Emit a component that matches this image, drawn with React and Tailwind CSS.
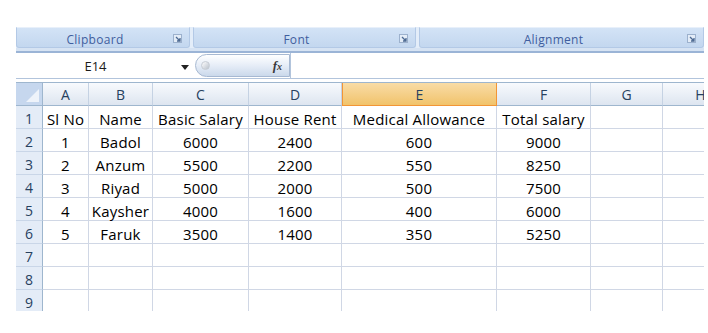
import React from "react";

const cols = [
  { key: "A", w: "w-[46px]" },
  { key: "B", w: "w-[64px]" },
  { key: "C", w: "w-[96px]" },
  { key: "D", w: "w-[93px]" },
  { key: "E", w: "w-[155px]" },
  { key: "F", w: "w-[94px]" },
  { key: "G", w: "w-[72px]" },
  { key: "H", w: "w-[76px]" },
];

const rows = [
  ["Sl No", "Name", "Basic Salary", "House Rent", "Medical Allowance", "Total salary"],
  ["1", "Badol", "6000", "2400", "600", "9000"],
  ["2", "Anzum", "5500", "2200", "550", "8250"],
  ["3", "Riyad", "5000", "2000", "500", "7500"],
  ["4", "Kaysher", "4000", "1600", "400", "6000"],
  ["5", "Faruk", "3500", "1400", "350", "5250"],
  [],
  [],
  [],
];

function Launcher() {
  return (
    <svg width="9" height="9" viewBox="0 0 9 9" className="shrink-0 mt-[2px]">
      <rect x="0.5" y="0.5" width="8" height="8" fill="#e3ecf7" stroke="#9cb1cd" />
      <path d="M3 3 L7 7 M7 4 V7 H4" stroke="#4d6a93" strokeWidth="1.3" fill="none" />
    </svg>
  );
}

function Group({ label, w }) {
  return (
    <div
      className={`${w} shrink-0 h-[21px] flex items-center justify-between pr-[7px] rounded-b-[3px] border border-t-[#e8f0fa] border-[#b3c9e6] bg-gradient-to-b from-[#d3e3f6] to-[#c3d7ef]`}
    >
      <span className="flex-1 text-center pt-[4px] text-[12px] tracking-[0.3px] text-[#3f5e9e]">{label}</span>
      <Launcher />
    </div>
  );
}

export default function App() {
  return (
    <div className="w-[708px] h-[333px] bg-white overflow-hidden font-['Open_Sans',sans-serif]">
      <div className="ml-4 pt-[27px] w-[688px] overflow-hidden">
        {/* ribbon group labels */}
        <div className="flex gap-[3px] bg-[#e3edf9]">
          <Group label="Clipboard" w="w-[174px]" />
          <Group label="Font" w="w-[223px]" />
          <Group label="Alignment" w="w-[285px]" />
        </div>
        <div className="h-[5px] bg-[#d6e3f3] border-b-2 border-[#9bb4d6]" />

        {/* formula bar */}
        <div className="flex h-[26px] items-center bg-white border-b border-[#b2c4dc]">
          <div className="w-[159px] shrink-0 text-center pt-[3px] text-[13px] text-[#1b1b1b]">E14</div>
          <div className="w-[20px] shrink-0 flex justify-center pt-[3px]">
            <svg width="8" height="5" viewBox="0 0 8 5">
              <path d="M0 0 H8 L4 5 Z" fill="#222" />
            </svg>
          </div>
          <div className="w-[95px] shrink-0 h-[23px] rounded-l-full border border-[#a7b9d2] bg-gradient-to-b from-[#ffffff] via-[#e6edf7] to-[#cbd9eb] flex items-center justify-between pl-[5px] pr-[7px]">
            <span className="w-[9px] h-[9px] rounded-full bg-gradient-to-br from-[#ffffff] to-[#b9c1cb] border border-[#c6ccd4]" />
            <span className="font-['Liberation_Serif',serif] italic font-bold text-[13px] text-[#3a3a3a]">
              f<span className="text-[10px]">x</span>
            </span>
          </div>
          <div className="flex-1 h-full border-l border-[#b2c4dc]" />
        </div>
        <div className="h-[3px]" />

        {/* grid */}
        <div className="h-[229px] overflow-hidden border-t border-[#9eb6ce]">
          <div className="flex h-[23px]">
            <div className="w-[27px] shrink-0 h-full bg-[#c6d7ee] border-r border-b border-[#9eb6ce] flex items-end justify-end p-[3px]">
              <svg width="13" height="13" viewBox="0 0 13 13">
                <path d="M13 0 V13 H0 Z" fill="#eef3fa" />
              </svg>
            </div>
            {cols.map((c) => (
              <div
                key={c.key}
                className={`${c.w} shrink-0 h-full flex items-center justify-center pt-[1px] text-[14px] text-[#27415f] border-b ${
                  c.key === "E"
                    ? "bg-gradient-to-b from-[#f9dca6] to-[#f1c36a] border-x border-[#f29536]"
                    : "bg-gradient-to-b from-[#f8fafd] to-[#dde5f0] border-r border-r-[#c5d2e3] border-b-[#9eb6ce]"
                }`}
              >
                {c.key}
              </div>
            ))}
          </div>
          {rows.map((r, i) => (
            <div key={i} className="flex h-[23px]">
              <div className="w-[27px] shrink-0 h-full bg-[#e4ecf7] border-r border-r-[#9eb6ce] border-b border-b-[#c9d6e8] flex items-end justify-center pb-[1px] leading-[16px] text-[14px] text-[#27415f]">
                {i + 1}
              </div>
              {cols.map((c, j) => (
                <div
                  key={c.key}
                  className={`${c.w} shrink-0 h-full border-r border-b border-[#d0d7e5] flex items-end justify-center pb-[1px] leading-[16px] text-[15px] tracking-[0.2px] text-black whitespace-nowrap`}
                >
                  {r[j] || ""}
                </div>
              ))}
            </div>
          ))}
        </div>
      </div>
    </div>
  );
}
